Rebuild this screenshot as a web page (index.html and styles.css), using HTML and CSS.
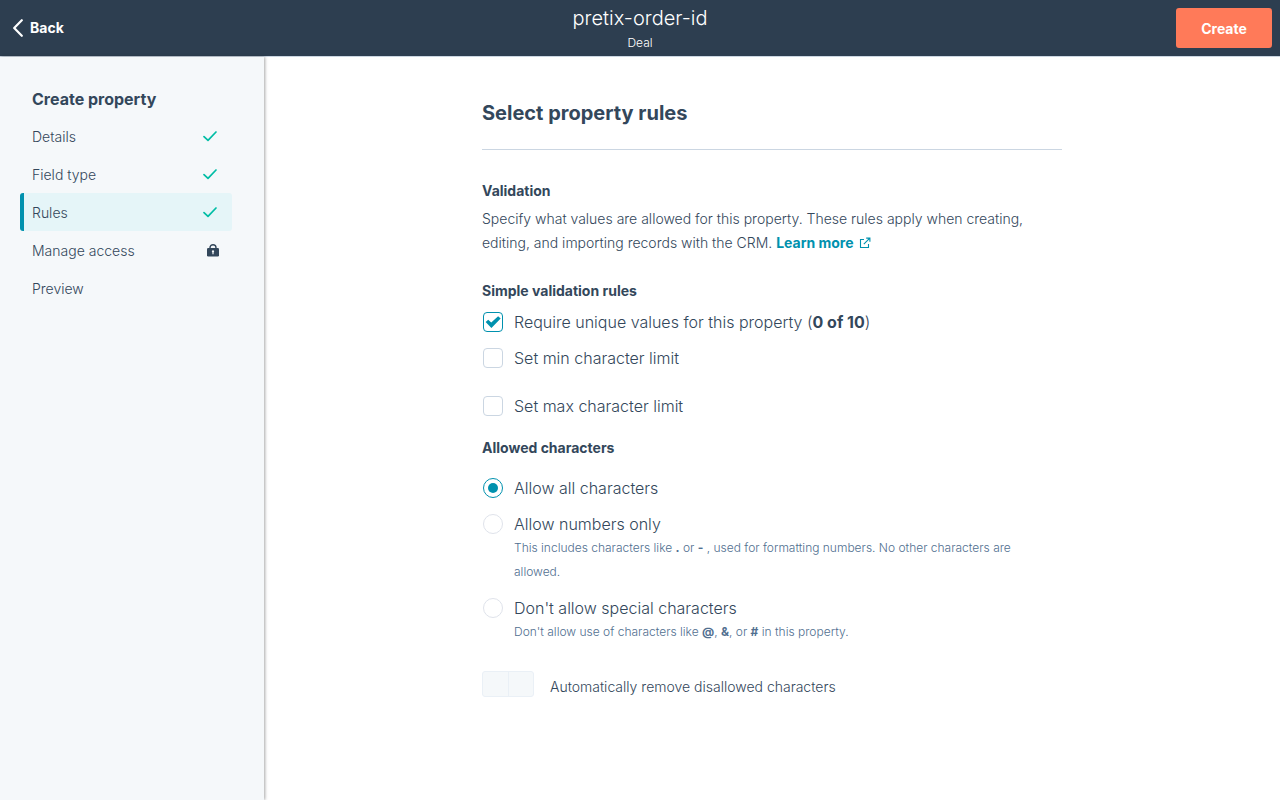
FILE: index.html
```html
<!DOCTYPE html>
<html lang="en">
<head>
<meta charset="utf-8">
<meta name="viewport" content="width=device-width, initial-scale=1">
<title>Create property</title>
<link rel="stylesheet" href="styles.css">
</head>
<body>
<header class="topbar">
  <button class="back" type="button">
    <svg width="10" height="18" viewBox="0 0 10 18" fill="none" stroke="currentColor" stroke-width="2.2" stroke-linecap="round" stroke-linejoin="round" aria-hidden="true"><path d="M8.800 1.200 1.200 9l7.600 7.800"/></svg>
    Back
  </button>
  <div class="heading">
    <div class="name">pretix-order-id</div>
    <div class="type">Deal</div>
  </div>
  <button class="create" type="button">Create</button>
</header>
<div class="layout">
  <nav class="sidebar" aria-label="Create property">
    <h2 class="sidebar-title">Create property</h2>
    <ul class="steps">
      <li><a class="step" href="#details">Details
        <svg class="tick" width="16" height="12" viewBox="0 0 16 12" aria-hidden="true"><path d="M2 5.600 6 9.400l8-8.400"/></svg></a></li>
      <li><a class="step" href="#field-type">Field type
        <svg class="tick" width="16" height="12" viewBox="0 0 16 12" aria-hidden="true"><path d="M2 5.600 6 9.400l8-8.400"/></svg></a></li>
      <li><a class="step current" href="#rules" aria-current="step">Rules
        <svg class="tick" width="16" height="12" viewBox="0 0 16 12" aria-hidden="true"><path d="M2 5.600 6 9.400l8-8.400"/></svg></a></li>
      <li><a class="step" href="#access">Manage access
        <svg class="lock" width="12" height="14" viewBox="0 0 12 14" aria-hidden="true"><path d="M3 5V3.700a3 3 0 0 1 6 0V5" fill="none" stroke="#33475b" stroke-width="1.400"/><rect y="4" width="12" height="8.500" rx="1.300" fill="#33475b"/><path d="M6 6.200a1.200 1.200 0 0 1 .6 2.200v1.800H5.400V8.400A1.200 1.200 0 0 1 6 6.200Z" fill="#f5f8fa"/></svg></a></li>
      <li><a class="step" href="#preview">Preview</a></li>
    </ul>
  </nav>
  <main class="main">
    <form class="content">
      <h1 class="title">Select property rules</h1>
      <section class="group">
        <h2 class="label">Validation</h2>
        <p class="text">Specify what values are allowed for this property. These rules apply when creating, editing, and importing records with the CRM. <a class="link" href="#learn">Learn more<svg width="12" height="12" viewBox="0 0 12 12" fill="none" stroke="currentColor" stroke-width="1.100" aria-hidden="true"><path d="M5 2.500H1.500v8h8V7M7.200 1.100h3.700v3.700M10.800 1.200 4.800 7.200"/></svg></a></p>
      </section>
      <fieldset class="group checks">
        <legend class="label">Simple validation rules</legend>
        <label class="option"><input class="box" type="checkbox" checked><span>Require unique values for this property (<b>0 of 10</b>)</span></label>
        <label class="option"><input class="box" type="checkbox"><span>Set min character limit</span></label>
        <label class="option apart"><input class="box" type="checkbox"><span>Set max character limit</span></label>
      </fieldset>
      <fieldset class="group radios">
        <legend class="label">Allowed characters</legend>
        <label class="option"><input class="dot" type="radio" name="chars" checked><span>Allow all characters</span></label>
        <label class="option"><input class="dot" type="radio" name="chars"><span>Allow numbers only<small class="help">This includes characters like <b>.</b> or <b>-</b> , used for formatting numbers. No other characters are allowed.</small></span></label>
        <label class="option"><input class="dot" type="radio" name="chars"><span>Don't allow special characters<small class="help">Don't allow use of characters like <b>@</b>, <b>&amp;</b>, or <b>#</b> in this property.</small></span></label>
      </fieldset>
      <label class="toggle-row"><input class="toggle" type="checkbox" role="switch" disabled><span class="toggle-text">Automatically remove disallowed characters</span></label>
    </form>
  </main>
</div>
</body>
</html>
```
FILE: styles.css
```css
* { box-sizing: border-box; }

body {
  margin: 0;
  min-height: 100vh;
  display: flex;
  flex-direction: column;
  background: #fff;
  color: #33475b;
  font: 300 14px/24px Inter, "Liberation Sans", sans-serif;
}

h1, h2, p, ul, fieldset { margin: 0; padding: 0; border: 0; }
ul { list-style: none; }
b { font-weight: 700; }
button { border: 0; font: inherit; font-weight: 700; color: #fff; cursor: pointer; }

.topbar {
  display: grid;
  grid-template-columns: 1fr auto 1fr;
  align-items: center;
  min-height: 57px;
  padding: 0 8px;
  background: #2d3e50;
  border-bottom: 1px solid #cbd6e2;
}
.back { display: flex; align-items: center; gap: 7px; justify-self: start; padding: 0 5px; background: none; }
.heading { text-align: center; color: #fff; }
.name { font-size: 20px; line-height: 30px; }
.type { font-size: 12px; line-height: 20px; }
.create { justify-self: end; min-width: 96px; height: 40px; padding: 2px 24px 0; border-radius: 3px; background: #ff7a59; }

.layout { flex: 1; display: flex; }

.sidebar {
  flex: 0 0 264px;
  padding: 30px 32px 30px 20px;
  background: #f5f8fa;
  box-shadow: 1px 0 3px rgba(0, 0, 0, 0.35);
}
.sidebar-title { padding: 0 12px; margin-bottom: 6px; font-size: 16px; font-weight: 700; }
.step {
  display: flex;
  align-items: center;
  justify-content: space-between;
  height: 38px;
  padding: 2px 14px 0 8px;
  border-left: 4px solid transparent;
  border-radius: 3px;
  color: inherit;
  text-decoration: none;
}
.current { background: #e5f5f8; border-left-color: #0091ae; }
.tick { fill: none; stroke: #00bda5; stroke-width: 1.7; stroke-linecap: round; stroke-linejoin: round; }
.lock { margin-right: -1px; }

.main { flex: 1; padding: 44px 32px; }
.content { max-width: 580px; margin: 0 auto; }
.title {
  padding-bottom: 24px;
  margin-bottom: 29px;
  border-bottom: 1px solid #cbd6e2;
  font-size: 20px;
  font-weight: 700;
}
.label { padding: 0; font-size: 14px; font-weight: 700; }
.text { margin-top: 4px; }
.link { color: #0091ae; font-weight: 700; text-decoration: none; }
.link svg { margin-left: 5px; vertical-align: -1px; }

.group { margin-bottom: 24px; }
.checks { margin-bottom: 6px; }
.checks .label { margin-bottom: 7px; }
.radios { margin-bottom: 12px; }
.radios .label { margin-bottom: 16px; }
.option { display: flex; gap: 10px; margin-bottom: 12px; padding-left: 1px; font-size: 16px; }
.option.apart { margin-top: 24px; }
.help { display: block; max-width: 520px; font-size: 12px; color: #516f90; }

.box, .dot, .toggle { appearance: none; flex: none; margin: 0; background: #fff; }
.box, .dot {
  display: grid;
  place-items: center;
  width: 20px;
  height: 20px;
  margin: 2px 1px 2px 0;
  border: 1px solid #cbd6e2;
}
.box { border-radius: 4px; }
.dot { border-radius: 50%; border-color: #dfe3eb; }
.box:checked, .dot:checked { border-color: #0091ae; }
.box:checked::before {
  content: "";
  width: 16px;
  height: 12px;
  background: #0091ae;
  clip-path: polygon(4% 50%, 20% 32%, 39% 54%, 82% 2%, 98% 21%, 40% 100%);
}
.dot:checked::before { content: ""; width: 10px; height: 10px; border-radius: 50%; background: #0091ae; }

.toggle-row { display: flex; align-items: start; gap: 16px; padding-top: 3px; }
.toggle-text { padding-top: 4px; }
.toggle {
  width: 52px;
  height: 26px;
  border: 1px solid #eaf0f6;
  border-radius: 3px;
  background: #f5f8fa;
}
.toggle::before { content: ""; display: block; width: 25px; height: 24px; border-right: 1px solid #eaf0f6; }
```
